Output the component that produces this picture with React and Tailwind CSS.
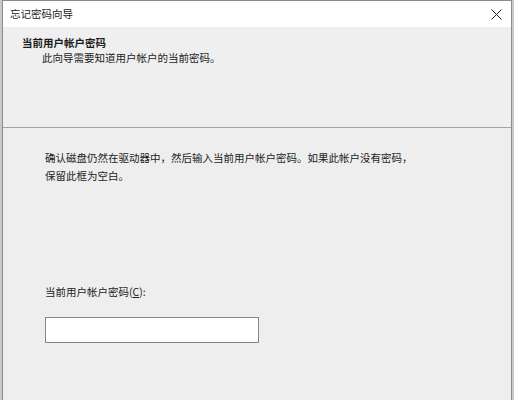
import React from "react";

const font = { fontFamily: '"Noto Sans CJK SC", "Noto Sans", sans-serif' };

export default function App() {
  return (
    <div className="w-[514px] h-[400px] bg-[#c9c9c9] overflow-hidden pl-[2px] pr-[2px]" style={font}>
      <div className="h-full flex flex-col border border-b-0 border-[#8c8c8c] bg-[#eeeeee] text-[#1c1c1c] text-[10.5px]">
        {/* title bar */}
        <div className="h-[26px] shrink-0 bg-white flex items-center justify-between pl-[7px] pr-[9px]">
          <span className="leading-[14px] text-[#222]">忘记密码向导</span>
          <svg width="11" height="11" viewBox="0 0 11 11" className="text-[#222]">
            <path d="M0.5 0.5 L10.5 10.5 M10.5 0.5 L0.5 10.5" stroke="currentColor" strokeWidth="1" />
          </svg>
        </div>

        {/* header */}
        <div className="h-[101px] shrink-0 bg-[#efefef] border-b border-[#a3a3a3] pt-[8px] pl-[19px]">
          <div className="font-bold leading-[15px]">当前用户帐户密码</div>
          <div className="leading-[15px] pl-[20px]">此向导需要知道用户帐户的当前密码。</div>
        </div>

        {/* body */}
        <div className="flex-1 pt-[21px] pl-[42px]">
          <div className="leading-[18px]">
            <div>确认磁盘仍然在驱动器中，然后输入当前用户帐户密码。如果此帐户没有密码，</div>
            <div>保留此框为空白。</div>
          </div>
          <div className="mt-[98px] leading-[18px]">
            当前用户帐户密码(<span className="underline">C</span>):
          </div>
          <input
            type="password"
            className="mt-[16px] block w-[214px] h-[26px] bg-white border border-[#7a8794] outline-none"
          />
        </div>
      </div>
    </div>
  );
}
